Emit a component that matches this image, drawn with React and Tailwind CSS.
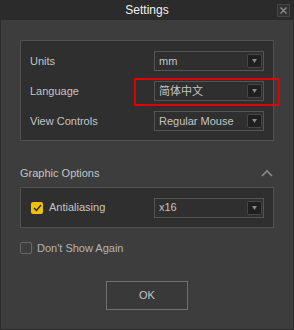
import { useState } from "react";

const font = { fontFamily: '"Liberation Sans", "Noto Sans CJK SC", sans-serif' };

function Arrow() {
  return (
    <span className="flex h-[14px] w-[15px] items-center justify-center rounded-[2px] border border-[#464646] bg-[#1f1f1f]">
      <svg width="5" height="4" viewBox="0 0 5 4">
        <path d="M0 0h5L2.5 4z" fill="#8a8a8a" />
      </svg>
    </span>
  );
}

function Select({ value }) {
  return (
    <div className="flex h-[20px] w-[110px] items-center justify-between border border-[#555] bg-[#2f2f2f] pl-[4px] pr-[1px] text-[11px] text-[#c4c4c4]">
      <span>{value}</span>
      <Arrow />
    </div>
  );
}

function Row({ label, value }) {
  return (
    <div className="flex h-[20px] items-center justify-between">
      <span className="text-[11px] text-[#c4c4c4]">{label}</span>
      <Select value={value} />
    </div>
  );
}

export default function App() {
  const [aa, setAa] = useState(true);
  const [dont, setDont] = useState(false);

  return (
    <div className="flex h-[330px] w-[294px] flex-col bg-[#3d3d3d]" style={font}>
      <div className="relative flex h-[20px] shrink-0 items-center justify-center bg-[#2b2b2b] text-[12px] text-[#f0f0f0]">
        Settings
        <span className="absolute right-[4px] top-[4px] flex h-[13px] w-[13px] items-center justify-center border border-[#444] bg-[#333]">
          <svg width="7" height="7" viewBox="0 0 7 7">
            <path d="M0.5 0.5l6 6M6.5 0.5l-6 6" stroke="#8d8d8d" strokeWidth="1.3" />
          </svg>
        </span>
      </div>

      <div className="flex flex-1 flex-col border-x border-b border-[#2b2b2b] px-[19px] pt-[20px]">
        <div className="relative flex h-[101px] flex-col gap-[10px] border border-[#505050] bg-[#2f2f2f] pl-[9px] pr-[9px] pt-[10px]">
          <Row label="Units" value="mm" />
          <Row label="Language" value="简体中文" />
          <Row label="View Controls" value="Regular Mouse" />
          <div className="absolute left-[113px] top-[37px] h-[28px] w-[146px] border-2 border-[#e00000]" />
        </div>

        <div className="mt-[25px] mb-[7px] flex h-[14px] items-center justify-between pr-[1px]">
          <span className="text-[11px] text-[#c4c4c4]">Graphic Options</span>
          <svg width="12" height="8" viewBox="0 0 12 8">
            <path d="M1 7l5-5 5 5" fill="none" stroke="#8a8a8a" strokeWidth="1.6" />
          </svg>
        </div>

        <div className="flex h-[41px] items-center justify-between border border-[#505050] bg-[#2f2f2f] pl-[10px] pr-[9px]">
          <button className="flex items-center gap-[6px]" onClick={() => setAa(!aa)}>
            <span className={`flex h-[12px] w-[12px] items-center justify-center rounded-[2px] ${aa ? "bg-[#f2c200]" : "border border-[#666]"}`}>
              {aa && (
                <svg width="9" height="8" viewBox="0 0 9 8">
                  <path d="M1 4l2.5 2.5L8 1" fill="none" stroke="#2a2a2a" strokeWidth="1.5" />
                </svg>
              )}
            </span>
            <span className="text-[11px] text-[#c4c4c4]">Antialiasing</span>
          </button>
          <Select value="x16" />
        </div>

        <button className="mt-[14px] flex h-[12px] items-center gap-[5px]" onClick={() => setDont(!dont)}>
          <span className="h-[12px] w-[12px] rounded-[2px] border border-[#686868]" />
          <span className="text-[11px] text-[#b4b4b4]">Don't Show Again</span>
        </button>

        <div className="mt-[27px] flex justify-center">
          <button className="h-[29px] w-[82px] border border-[#707070] bg-[#393939] text-[11px] text-[#c4c4c4]">
            OK
          </button>
        </div>
      </div>
    </div>
  );
}
